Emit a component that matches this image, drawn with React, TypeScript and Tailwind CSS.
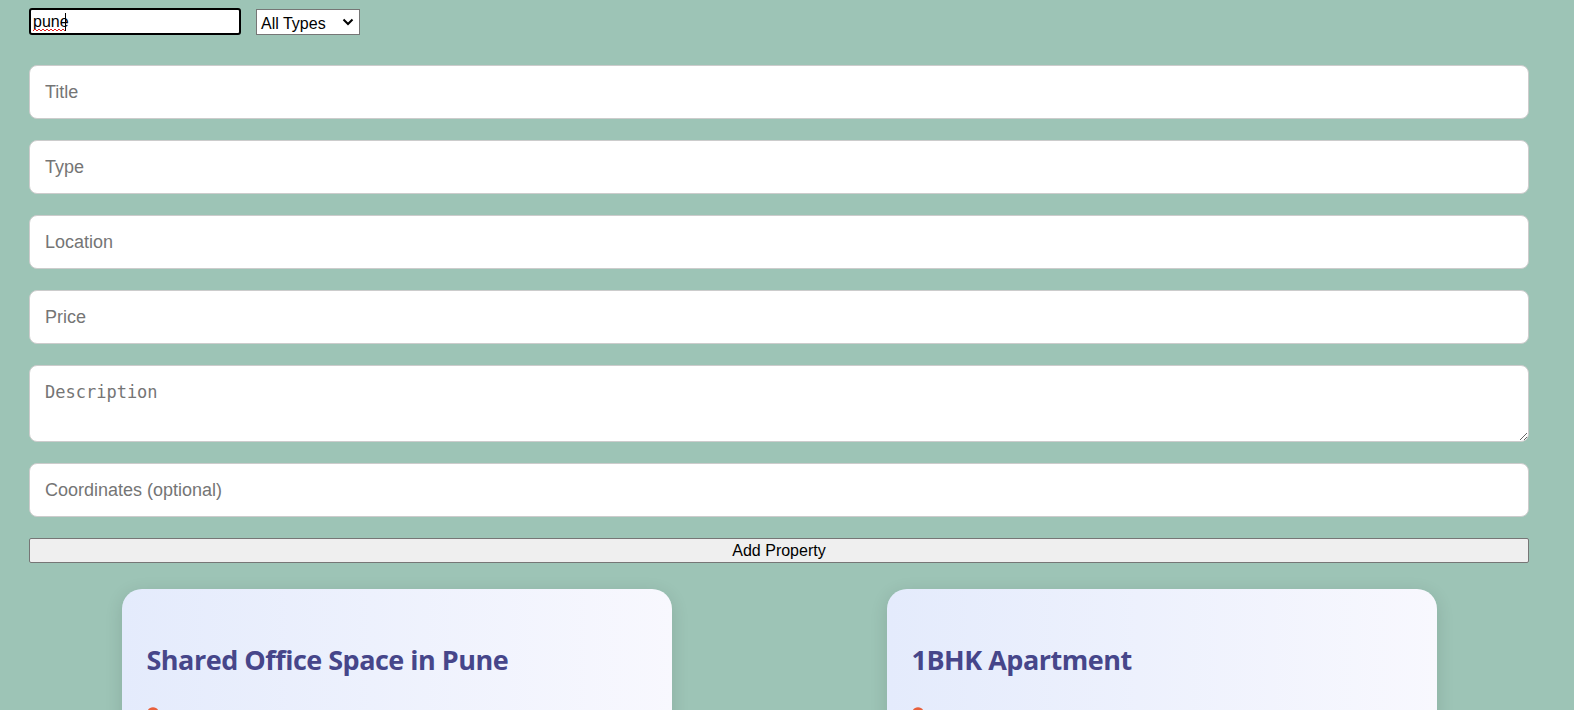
import React from "react";

const inputCls =
  "block w-full h-[54px] rounded-[8px] border border-[#cccccc] bg-white px-[15px] text-[18px] text-black placeholder:text-[#757575] outline-none";

function Card({ title }: { title: string }) {
  return (
    <div className="mx-auto w-[550px] h-[260px] rounded-[20px] bg-gradient-to-r from-[#e4ebfc] to-[#f8f8fe] px-[25px] pt-[52px] shadow-[0_4px_18px_rgba(0,0,0,0.12)]">
      <h2
        className="text-[27px] font-bold text-[#46468a] leading-[38px]"
        style={{ fontFamily: "'Open Sans', 'Noto Sans', sans-serif", letterSpacing: "-0.5px" }}
      >
        {title}
      </h2>
      <div className="mt-[28px] flex items-center gap-2">
        <svg width="12" height="16" viewBox="0 0 14 18">
          <path d="M7 0C3.1 0 0 3.1 0 7c0 5 7 11 7 11s7-6 7-11c0-3.9-3.1-7-7-7z" fill="#e8603c" />
          <circle cx="7" cy="7" r="2.5" fill="#f7a35c" />
        </svg>
      </div>
    </div>
  );
}

export default function App() {
  return (
    <div
      className="h-[710px] w-[1574px] overflow-hidden bg-[#9dc4b6]"
      style={{ fontFamily: "'Liberation Sans', Arial, sans-serif" }}
    >
      <div className="ml-[29px] w-[1500px] pt-[8px]">
        <div className="flex items-start gap-[15px]">
          <div className="relative">
            <input
              defaultValue="pune"
              spellCheck
              className="h-[27px] w-[212px] rounded-[3px] border-2 border-black bg-white px-[2px] text-[16px] text-black outline-none"
            />
            <span className="absolute left-[36px] top-[5px] h-[18px] w-[1px] bg-black" />
            <svg className="absolute left-[4px] top-[20px]" width="32" height="4" viewBox="0 0 32 4">
              <path
                d="M0 3 L2 1 L4 3 L6 1 L8 3 L10 1 L12 3 L14 1 L16 3 L18 1 L20 3 L22 1 L24 3 L26 1 L28 3 L30 1 L32 3"
                stroke="#e02020"
                strokeWidth="1"
                fill="none"
              />
            </svg>
          </div>
          <div className="relative mt-[1px] h-[26px] w-[104px] border border-[#767676] bg-white text-[16px] text-black">
            <span className="absolute left-[4px] top-[2px]">All Types</span>
            <svg className="absolute right-[5px] top-[8px]" width="12" height="9" viewBox="0 0 12 9">
              <path d="M1.5 1.5 L6 6 L10.5 1.5" stroke="#000" strokeWidth="2" fill="none" />
            </svg>
          </div>
        </div>

        <div className="mt-[30px] flex flex-col gap-[21px]">
          <input className={inputCls} placeholder="Title" />
          <input className={inputCls} placeholder="Type" />
          <input className={inputCls} placeholder="Location" />
          <input className={inputCls} placeholder="Price" />
          <textarea
            className="block h-[77px] w-full rounded-[8px] border border-[#cccccc] bg-white px-[15px] pt-[14px] text-[18px] text-black placeholder:text-[#757575] outline-none"
            style={{ fontFamily: "'DejaVu Sans Mono', 'Liberation Mono', monospace", fontSize: "17px" }}
            placeholder="Description"
          />
          <input className={inputCls} placeholder="Coordinates (optional)" />
          <button className="block h-[25px] w-full rounded-[2px] border border-[#767676] bg-[#efefef] text-[16px] text-black">
            Add Property
          </button>
        </div>

        <div className="mt-[26px] grid grid-cols-2 gap-[30px]">
          <Card title="Shared Office Space in Pune" />
          <Card title="1BHK Apartment" />
        </div>
      </div>
    </div>
  );
}
